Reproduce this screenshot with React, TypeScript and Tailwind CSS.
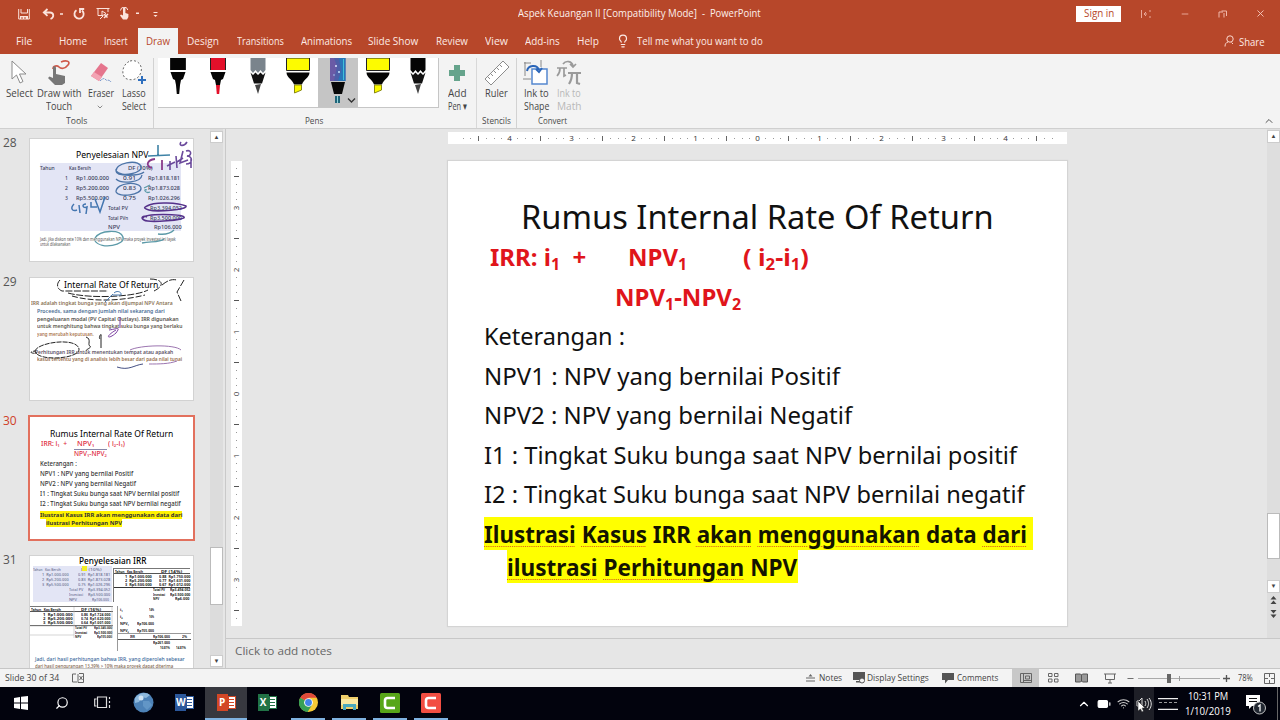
import { useLayoutEffect, useRef, useState } from "react";
import type { ReactNode } from "react";
import {
  BatteryMedium,
  ChevronDown,
  ChevronUp,
  Lightbulb,
  Minus,
  Search,
  Wifi,
  X,
} from "lucide-react";

type FitProps = { w: number; gap?: number; className?: string; children: ReactNode };

// One line of text, squeezed or stretched to an exact width.
const Fit = ({ w, gap = 0, className = "", children }: FitProps) => {
  const ref = useRef<HTMLSpanElement>(null);
  const [scale, setScale] = useState(1);

  useLayoutEffect(() => {
    if (ref.current) setScale(w / ref.current.offsetWidth);
  }, [w]);

  return (
    <span className={`block shrink-0 whitespace-pre ${className}`} style={{ width: w, marginLeft: gap }}>
      <span ref={ref} className="inline-block origin-left" style={{ transform: `scaleX(${scale})` }}>
        {children}
      </span>
    </span>
  );
};

const TitleBar = () => (
  <div className="flex h-[27px] items-center text-[#fdf0ec]">
    <svg className="ml-[18px] h-3 w-3" viewBox="0 0 12 12" fill="none" stroke="#fbe3dc">
      <path d="M.7 1v10h10.6V1M3 1v4h6.500V1" />
      <path d="M2 9.500h8" strokeWidth="3" />
      <path d="M4 9v2M7 9v2" stroke="#b7472a" />
    </svg>
    <svg className="ml-[12px] h-3 w-[22px]" viewBox="0 0 22 12" fill="none" stroke="#fbe3dc" strokeWidth="1.800">
      <path d="M5.500 1 1.800 4.500l3.700 3.300M2 4.500h6c4 0 4.500 5 .500 6.500" />
      <path d="M18 6h3" strokeWidth="1.500" />
    </svg>
    <svg className="ml-[9px] h-3 w-3" viewBox="0 0 12 12" fill="none" stroke="#fbe3dc" strokeWidth="1.800">
      <path d="M3.500 2.200a4.600 4.600 0 1 0 5.500.3M7 5V1h4.200" />
    </svg>
    <svg className="ml-[11px] h-[13px] w-[14px]" viewBox="0 0 14 13" fill="none" stroke="#fbe3dc">
      <path d="M.5 1.500h13M2 2v6.500h5M12 2v3M4 12l3-3M6 4l4 2.500L6 9z" />
      <path d="m8 11 4-4M8.500 7.500l3 3" strokeWidth="1.500" />
    </svg>
    <svg className="ml-[9px] h-[13px] w-[22px]" viewBox="0 0 22 13" fill="#fbe3dc">
      <path d="M4 1.500a1.200 1.200 0 0 1 2.400 0V6l3 1v3L8 12.500H4L1 8.500l1-1 2 1z" />
      <path d="M1.500 3.500A3.700 3.700 0 0 1 8.800 3" fill="none" stroke="#fbe3dc" />
      <path d="M17 5.500h3v1.500h-3z" />
    </svg>
    <svg className="ml-[11px] h-2 w-2" viewBox="0 0 8 8" fill="#fbe3dc">
      <path d="M1.500 2h4v1h-4zM1.500 5h4l-2 2z" />
    </svg>
    <Fit w={179} gap={358} className="text-[10.5px]">Aspek Keuangan II [Compatibility Mode]</Fit>
    <Fit w={64} className="text-[10.5px]">{"  -  PowerPoint"}</Fit>
    <div className="ml-[315px] flex h-4 w-[45px] items-center justify-center bg-white text-[#b7472a]">
      <Fit w={30} className="text-[10.5px] font-medium">Sign in</Fit>
    </div>
    <svg className="ml-[19px] h-2 w-3" viewBox="0 0 12 8" fill="none" stroke="#e9a898">
      <path d="M1.500 0v8M4 4h3M6 2 4 4l2 2M9 1h2M9 7h2" />
    </svg>
    <Minus className="ml-[28px] h-[10px] w-[10px] text-[#f0b8aa]" />
    <svg className="ml-[28px] h-2 w-[10px]" viewBox="0 0 10 8" fill="none" stroke="#f0b8aa">
      <path d="M1 7.500V2h4M3.500 1h5v5M6 3v4.500" />
    </svg>
    <X className="ml-[27px] h-[11px] w-[11px] text-[#f5c8bd]" />
  </div>
);

const TABS: [string, number, number][] = [
  ["Design", 9, 32],
  ["Transitions", 18, 47],
  ["Animations", 17, 51],
  ["Slide Show", 16, 50],
  ["Review", 18, 32],
  ["View", 17, 23],
  ["Add-ins", 17, 35],
  ["Help", 17, 22],
];

const TabRow = () => (
  <div className="flex h-[27px] items-center pt-px text-[11px] text-[#fdeae5]">
    <Fit w={16} gap={16}>File</Fit>
    <Fit w={28} gap={27}>Home</Fit>
    <Fit w={24} gap={17}>Insert</Fit>
    <div className="ml-[10px] flex h-[26px] w-10 items-center justify-center self-end bg-[#f3f3f3] text-[#b7472a]">
      <Fit w={24}>Draw</Fit>
    </div>
    {TABS.map(([label, gap, w]) => (
      <Fit key={label} w={w} gap={gap}>{label}</Fit>
    ))}
    <Lightbulb className="ml-[17px] h-[14px] w-[14px]" strokeWidth={2} />
    <Fit w={126} gap={7}>Tell me what you want to do</Fit>
    <svg className="ml-[461px] h-3 w-[11px]" viewBox="0 0 11 12" fill="none" stroke="#fbd9cf">
      <circle cx="6" cy="4" r="3.200" />
      <path d="M1 11.500c0-2.500 1-4 3-4.500M7.500 7.500l1.500 1.500" />
    </svg>
    <Fit w={26} gap={4} className="mt-[2px]">Share</Fit>
  </div>
);

const ToolButton = ({ icon, w, lines, className = "" }: { icon: ReactNode; w: number; lines: string[]; className?: string }) => (
  <div className={`flex flex-col items-center text-[10.5px] leading-[13px] text-[#454545] ${className}`}>
    <div className="flex h-[29px] items-center">{icon}</div>
    {lines.map((line, i) => (
      <Fit key={line} w={i === 0 ? w : Math.min(w, 26)}>{line}</Fit>
    ))}
  </div>
);

const GroupLabel = ({ w, className = "", children }: { w: number; className?: string; children: ReactNode }) => (
  <div className={`mt-auto flex h-[14px] justify-center text-[9px] leading-[14px] text-[#4a4a4a] ${className}`}>
    <Fit w={w}>{children}</Fit>
  </div>
);

const MarkerPen = ({ kind, color }: { kind: string; color: string }) => (
  <svg className="h-[50px] w-10" viewBox="0 0 40 50">
    {kind === "pen" && (
      <>
        <path d="M12.500 0h15v12h-15z" fill={color} />
        <path d="M12.500 0v12M27.500 0v12" stroke="#222" />
        <path d="M12.500 14h15l-2.500 7-2 1-1 5h-4l-1-5-2-1z" fill="#050505" />
        <path d="M18 27h4l-.8 9h-2.400z" fill={color} />
      </>
    )}
    {kind === "pencil" && (
      <>
        <path d="M12.500 0h15v12l-2.500 3-2.500-3-2.500 3-2.500-3-2.500 3-2.500-3z" fill={color} />
        <path d="M12.500 14.500 15 17l2.500-2.500L20 17l2.500-2.500L25 17l2.500-2.500-3.500 11h-8z" fill="#111" />
        <path d="m17 27 6-1-3 10z" fill="#444" />
      </>
    )}
    {kind === "highlighter" && (
      <>
        <path d="M8.500 0h23v12.500h-23z" fill={color} stroke="#222" />
        <path d="M8.500 14.500h23c0 5-6 7-7.500 12h-8c-1.500-5-7.500-7-7.500-12z" fill="#050505" />
        <path d="M16.500 27h7v5l-7 3z" fill={color} stroke="#8a8a10" />
      </>
    )}
    {kind === "galaxy" && (
      <>
        <rect x="12" width="15.500" height="23" fill="#4d5fa8" />
        <path d="M12 0h4l3 8-3 15h-4z" fill="#6a5ba6" />
        <path d="M21 0h6.500v23H20l3-10z" fill="#2876b8" />
        <path d="M25.500 1v21" stroke="#3fc0d8" />
        <circle cx="18" cy="8" r="1" fill="#d8e8ff" />
        <circle cx="21" cy="14" r="1" fill="#c0e4ff" />
        <circle cx="16" cy="17" r=".8" fill="#a8d0f8" />
        <path d="M13 24h14l-3 12h-8z" fill="#080808" />
        <path d="M17 38h5v7h-5z" fill="#1f6478" />
        <path d="M19.500 38v7" stroke="#8fd4dc" />
        <path d="m30 40.500 3.500 3.500 3.500-3.500" fill="none" stroke="#333" strokeWidth="1.300" />
      </>
    )}
  </svg>
);

const PENS = [
  ["pen", "#050505"],
  ["pen", "#e3102a"],
  ["pencil", "#7a848c"],
  ["highlighter", "#fdfb00"],
  ["galaxy", ""],
  ["highlighter", "#fdfb00"],
  ["pencil", "#050505"],
];

const Ribbon = () => (
  <div className="flex h-[75px] border-b border-[#cfcfcf] bg-[#f3f3f3] pt-[4px]">
    <div className="flex w-[153px] flex-col">
      <div className="flex">
        <ToolButton
          className="ml-[5px] w-7"
          w={27}
          lines={["Select"]}
          icon={
            <svg className="h-[26px] w-[18px]" viewBox="0 0 18 26" fill="#fff" stroke="#8b8b8b">
              <path d="M2 1v18l4.500-4 3.500 8 3-1.500-3.500-7.500H16z" />
            </svg>
          }
        />
        <ToolButton
          className="ml-[3px] w-[46px]"
          w={45}
          lines={["Draw with", "Touch"]}
          icon={
            <svg className="h-[26px] w-6" viewBox="0 0 24 26">
              <path d="M6 9c0-3 4-4 6-2s6 2 9-2-2-5-7-3" fill="none" stroke="#cf5a4b" strokeWidth="1.700" />
              <path d="M6 7c1-1.500 3-1 3 1v6l9 2v7l-3 2H8l-7-7 1.500-1.500L6 18z" fill="#777" />
            </svg>
          }
        />
        <ToolButton
          className="ml-[5px] w-[28px]"
          w={26}
          lines={["Eraser"]}
          icon={
            <svg className="h-[26px] w-6" viewBox="0 0 24 26">
              <path d="m12 3 7 5-9 13-8-5z" fill="#e5758d" />
              <path d="m2 16 3-4 8 5-3 4z" fill="#f3a3b3" />
              <path d="M11 21c4-4 5-2 6-1s3-1 5 2" fill="none" stroke="#6a8cc7" strokeDasharray="2 1" />
            </svg>
          }
        />
        <ToolButton
          className="ml-[5px] w-7"
          w={24}
          lines={["Lasso", "Select"]}
          icon={
            <svg className="h-[26px] w-6" viewBox="0 0 24 26" fill="none">
              <path d="M8 1c7-2 13 4 11 11s-8 9-14 7S-1 5 8 1z" fill="#fff" stroke="#6b6b6b" strokeDasharray="2 2" />
              <path d="M20 16v8M16 20h8" stroke="#2f6fbe" strokeWidth="2" />
            </svg>
          }
        />
      </div>
      <div className="-mt-[10px] flex h-2 justify-end pr-[49px]">
        <ChevronDown className="h-2 w-2 text-[#555]" />
      </div>
      <GroupLabel w={21}>Tools</GroupLabel>
    </div>
    <div className="flex w-[323px] flex-col border-l border-[#d2d2d2] pl-[4px]">
      <div className="flex">
        <div className="flex h-[50px] border-r border-b border-[#c6c6c6] bg-white">
          {PENS.map(([kind, color], i) => (
            <div key={i} className={kind === "galaxy" ? "bg-[#c5c5c5]" : "bg-white"}>
              <MarkerPen kind={kind} color={color} />
            </div>
          ))}
        </div>
        <ToolButton
          className="ml-[4px] w-7"
          w={19}
          lines={["Add", "Pen ▾"]}
          icon={
            <svg className="h-[18px] w-[18px]" viewBox="0 0 18 18" fill="#66a48c">
              <path d="M6 1h6v5h5v6h-5v5H6v-5H1V6h5z" />
            </svg>
          }
        />
      </div>
      <GroupLabel w={18} className="pr-[6px]">Pens</GroupLabel>
    </div>
    <div className="flex w-10 flex-col border-l border-[#d8d8d8]">
      <ToolButton
        w={23}
        lines={["Ruler"]}
        icon={
          <svg className="h-[26px] w-[26px]" viewBox="0 0 26 26" fill="#fff" stroke="#8c8c8c">
            <path d="M1 19 19 1l6 6L7 25z" />
            <path d="m4 17 2 2m1-5 2 2m1-5 2 2m1-5 2 2m1-5 2 2" />
          </svg>
        }
      />
      <GroupLabel w={29}>Stencils</GroupLabel>
    </div>
    <div className="flex w-[72px] flex-col border-l border-[#d2d2d2]">
      <div className="flex">
        <ToolButton
          className="ml-[3px] w-8"
          w={25}
          lines={["Ink to", "Shape"]}
          icon={
            <svg className="h-[26px] w-[26px]" viewBox="0 0 26 26" fill="none">
              <path d="M9 9h15v15H9z" fill="#fff" stroke="#5588cf" strokeWidth="1.500" />
              <path d="M2 2v14M0 19h8M18 0v7M1 3h7" stroke="#888" />
              <path d="M4 11c1-6 10-7 12-1m-3-1 3 3 3-4" stroke="#2b66b9" strokeWidth="2" />
            </svg>
          }
        />
        <ToolButton
          className="ml-[1px] w-8 text-[#b8b8b8]!"
          w={24}
          lines={["Ink to", "Math"]}
          icon={
            <svg className="h-[26px] w-[26px]" viewBox="0 0 26 26" fill="none" stroke="#9a9a9a" strokeWidth="1.700">
              <path d="M1 8h10M4 8c0 4-1 6-3 8M8 8v8l2-1" />
              <path d="M12 13h13M16 13c0 5-1 8-3 11M21 13v10l3 1" strokeWidth="2.200" />
              <path d="M7 4c3-4 9-3 10 2m-3-2 3 3 3-3" />
            </svg>
          }
        />
      </div>
      <GroupLabel w={29}>Convert</GroupLabel>
    </div>
    <ChevronUp className="mt-auto mr-[5px] mb-[1px] ml-auto h-3 w-3 text-[#555]" />
  </div>
);

type Row = { h: number; cells: [number, number, string][]; className?: string };

const MiniRows = ({ rows }: { rows: Row[] }) => (
  <>
    {rows.map((row, i) => (
      <div key={i} className={`flex items-center ${row.className ?? ""}`} style={{ height: row.h }}>
        {row.cells.map(([gap, w, text], j) => (
          <Fit key={j} gap={gap} w={w}>{text}</Fit>
        ))}
      </div>
    ))}
  </>
);

const NPV_ROWS: Row[] = [
  { h: 10, cells: [[0, 15, "Tahun"], [14, 22, "Kas Bersih"], [37, 25, "DF (10%)"]] },
  { h: 10, cells: [[25, 3, "1"], [8, 33, "Rp1.000.000"], [14, 13, "0.91"], [12, 32, "Rp1.818.181"]] },
  { h: 10, cells: [[25, 3, "2"], [8, 33, "Rp5.200.000"], [14, 13, "0.83"], [12, 32, "Rp1.873.028"]] },
  { h: 10, cells: [[25, 3, "3"], [8, 33, "Rp5.500.000"], [14, 13, "0.75"], [12, 32, "Rp1.026.296"]] },
  { h: 10, cells: [[68, 20, "Total PV"], [22, 32, "Rp3.394.052"]] },
  { h: 9, cells: [[68, 20, "Total PVn"], [22, 32, "Rp3.500.000"]] },
  { h: 10, cells: [[68, 12, "NPV"], [34, 28, "Rp106.000"]] },
];

const IRR_TEXT: Row[] = [
  { h: 7.7, cells: [[1, 142, "IRR adalah tingkat bunga yang akan dijumpai NPV Antara"]], className: "text-[#8b7355]" },
  { h: 7.7, cells: [[7, 128, "Proceeds, sama dengan jumlah nilai sekarang dari"]], className: "text-[#4d6f96]" },
  { h: 7.7, cells: [[7, 142, "pengeluaran modal (PV Capital Outlays). IRR digunakan"]], className: "text-[#53504a]" },
  { h: 7.7, cells: [[7, 145, "untuk menghitung bahwa tingkat suku bunga yang berlaku"]], className: "text-[#60594e]" },
  { h: 7.7, cells: [[7, 57, "yang merubah keputusan."]], className: "text-[#ad7850]" },
  { h: 10, cells: [] },
  { h: 7.7, cells: [[5, 138, "Perhitungan IRR untuk menentukan tempat atau apakah"]], className: "text-[#5d5366]" },
  { h: 7.7, cells: [[7, 145, "kasus tertentu yang di analisis lebih besar dari pada nilai tunai"]], className: "text-[#966d4c]" },
];

const FORMULA_ROWS: Row[] = [
  { h: 10, cells: [[0, 93, "NPV1 : NPV yang bernilai Positif"]] },
  { h: 10.5, cells: [[0, 96, "NPV2 : NPV yang bernilai Negatif"]] },
  { h: 10, cells: [[0, 139, "I1 : Tingkat Suku bunga saat NPV bernilai positif"]] },
  { h: 10, cells: [[0, 141, "I2 : Tingkat Suku bunga saat NPV bernilai negatif"]] },
];

const Thumb = ({ n, active = false, children }: { n: number; active?: boolean; children: ReactNode }) => (
  <div className="flex h-[139px] shrink-0">
    <div className={`w-[30px] pl-[3px] text-[12px] leading-[8px] ${active ? "text-[#cf3f28]" : "text-[#555]"}`}>
      <Fit w={14}>{n}</Fit>
    </div>
    <div
      className={`relative h-[122px] w-[163px] overflow-hidden bg-white font-['Noto_Sans',sans-serif] text-black ${
        active ? "outline-2 outline-[#e2705d]" : "outline outline-[#d2d2d2]"
      }`}
    >
      {children}
    </div>
  </div>
);

const SlidePanel = () => (
  <div className="flex w-[226px] border-r border-[#c9c9c9]">
    <div className="flex w-[210px] flex-col overflow-hidden pt-[10px]">
      <Thumb n={28}>
        <div className="flex h-[24px] items-center pt-[8px] text-[9px]">
          <Fit w={72} gap={46}>Penyelesaian NPV</Fit>
        </div>
        <div className="ml-[10px] h-[68px] w-[141px] bg-[#e3e5f5] text-[5px] leading-[6px] font-medium text-[#3c415c]">
          <MiniRows rows={NPV_ROWS} />
        </div>
        <div className="mt-[6px] ml-[10px] text-[4.5px] leading-[5px] text-[#555]">
          <Fit w={136}>Jadi, jika diskon rate 10% dan menggunakan NPV maka proyek investasi ini layak</Fit>
          <Fit w={30}>untuk dilaksanakan</Fit>
        </div>
        <svg className="absolute inset-0 h-full w-full" viewBox="0 0 163 122" fill="none" stroke="#6b4a9c" strokeWidth="1.300">
          <path d="M86 32c0-8 20-12 25-5 3 7-20 12-25 5 0 6 24 5 28 1M86 40c5 5 25 4 26-4M86 53c0-10 24-11 25-4s-22 10-25 4" stroke="#4d75a8" />
          <path d="M128 6v11M118 17l22-1" stroke="#3f83a6" strokeWidth="1.600" />
          <path d="M125 20c-8 1-10 7-3 9M132 21v10" stroke="#8a3a8a" strokeWidth="1.800" />
          <path d="M140 22v9M137 27l8-4M146 17l1 12M147 23l6-4M153 12l-3 12 8-3M151 3c-3 4 3 5 6 0M156 12c7-2 5 6 1 5 6 0 6 8-1 8M161 20v9" strokeWidth="1.600" />
          <path d="M44 65c-4 4-2 8 3 6M49 66l1 8M56 65c-5 0-3 5 1 3l-1 7M61 63v5h6M65 60l5 13 5-15" stroke="#4476b0" strokeWidth="1.500" />
          <path d="M117 67c8-5 32-3 39 0 2 4-30 6-37 4s-4-3-2-4M113 79c2-5 38-4 41-1s-35 6-40 3c-4-2-1-5 3-3" stroke="#56328b" strokeWidth="1.600" />
          <path d="M65 99c5-8 25-9 28-1s-22 13-28 4M128 95c8 1 13-1 16-4M112 104c8-2 17 0 22-4M114 49l6-3M117 51c-4-2-2 4 3 2" stroke="#5c9aa8" />
        </svg>
      </Thumb>

      <Thumb n={29}>
        <div className="flex h-[14px] items-center text-[9px]">
          <Fit w={94} gap={34}>Internal Rate Of Return</Fit>
        </div>
        <div className="pt-[8px] text-[5.5px] leading-[7px] font-semibold">
          <MiniRows rows={IRR_TEXT} />
        </div>
        <svg className="absolute inset-0 h-full w-full" viewBox="0 0 163 122" fill="none" stroke="#222">
          <path d="M30 2c-4 4-3 9 2 11h46M38 15c22 6 67 4 80-3M120 1c12 0 16 6 4 12M132 7c6-5 10-6 15-5M154 2l-7 12 4 9" strokeDasharray="7 1.500" />
          <path d="M42 18c20 6 50 5 73-1" strokeDasharray="6 2" />
          <path d="M75 24 83 16M84 15c3-3 8-1 7 2h-8" stroke="#4a7bb0" />
          <path d="M5 73c3-9 42-14 44-2 1 10-42 13-44 2-8 1-2 3 2 2" strokeDasharray="5 1" />
          <path d="M56 59c6 2 1 8 4 9 2 2-4 3-4 5M71 70V58c1-4-3 1-1 3" />
          <path d="M86 52c-12 7-8 10 0 3 5-7 1-4-7-3M90 39v11" stroke="#7b3ea0" />
          <path d="M100 72c10-5 45-6 51 0M119 86c10 0 20 0 28-3" stroke="#9c75b0" />
          <path d="M87 89c12 4 17-2 26-3" stroke="#444f83" />
        </svg>
      </Thumb>

      <Thumb n={30} active>
        <div className="flex h-[22px] items-end text-[9px] leading-[11px]">
          <Fit w={123} gap={20}>Rumus Internal Rate Of Return</Fit>
        </div>
        <div className="flex h-[9px] items-center text-[6.5px] leading-[8px] font-medium text-[#e02a3c]">
          <Fit w={26} gap={11}>IRR: i₁  +</Fit>
          <Fit w={17} gap={10}>NPV₁</Fit>
          <Fit w={17} gap={14}>( i₂-i₁)</Fit>
        </div>
        <div className="flex h-[10px] items-center text-[6.5px] leading-[8px] font-medium text-[#e02a3c]">
          <Fit w={33} gap={44} className="border-t border-[#88a]">NPV₁-NPV₂</Fit>
        </div>
        <div className="ml-[10px] pt-px text-[6.5px] leading-[9px] font-medium text-[#333]">
          <Fit w={37}>Keterangan :</Fit>
          <MiniRows rows={FORMULA_ROWS} />
          <div className="mt-[2px] flex h-[8px] text-[6px] leading-[8px] font-bold">
            <Fit w={142} className="bg-[#fff200]">Ilustrasi Kasus IRR akan menggunakan data dari</Fit>
          </div>
          <div className="flex h-[8px] text-[6px] leading-[8px] font-bold">
            <Fit w={76} gap={6} className="bg-[#fff200]">ilustrasi Perhitungan NPV</Fit>
          </div>
        </div>
      </Thumb>

      <Thumb n={31}>
        <div className="flex h-[10px] items-center text-[9px] leading-[10px] font-medium">
          <Fit w={67} gap={49}>Penyelesaian IRR</Fit>
        </div>
        <div className="flex text-[4px] leading-[5px] font-bold text-[#222]">
          <div className="ml-[3px] h-[36px] w-[79px] bg-[#e3e5f5] font-medium text-[#686e90]">
            <MiniRows
              rows={[
                { h: 6, cells: [[0, 28, "Tahun   Kas Bersih"], [20, 21, "DF (10%)"]] },
                { h: 5, cells: [[9, 27, "1  Rp1.000.000"], [9, 32, "0.91  Rp1.818.181"]] },
                { h: 5, cells: [[9, 27, "2  Rp5.200.000"], [9, 32, "0.83  Rp1.873.028"]] },
                { h: 5, cells: [[9, 27, "3  Rp5.500.000"], [9, 32, "0.75  Rp1.026.296"]] },
                { h: 5, cells: [[36, 14, "Total PV"], [5, 22, "Rp3.394.052"]] },
                { h: 5, cells: [[36, 14, "Investasi"], [5, 22, "Rp3.500.000"]] },
                { h: 5, cells: [[36, 8, "NPV"], [15, 17, "Rp106.000"]] },
              ]}
            />
          </div>
          <div className="mt-[2px] ml-[1px] h-[34px] w-[77px] border-t border-l border-[#777]">
            <MiniRows
              rows={[
                { h: 5, cells: [[1, 28, "Tahun   Kas Bersih"], [18, 21, "DF (14%)"]], className: "border-b border-[#555]" },
                { h: 4.500, cells: [[11, 27, "1  Rp1.000.000"], [7, 31, "0.88  Rp1.750.000"]] },
                { h: 4.500, cells: [[11, 27, "2  Rp5.200.000"], [7, 31, "0.77  Rp1.631.000"]] },
                { h: 4.500, cells: [[11, 27, "3  Rp5.500.000"], [7, 31, "0.67  Rp1.012.000"]], className: "border-b border-[#333]" },
                { h: 4.500, cells: [[39, 12, "Total PV"], [5, 20, "Rp3.494.052"]] },
                { h: 4.500, cells: [[39, 12, "Investasi"], [5, 20, "Rp3.500.000"]] },
                { h: 4.500, cells: [[39, 6, "NPV"], [16, 14, "Rp6.000"]] },
              ]}
            />
          </div>
        </div>
        <div className="mt-[4px] flex text-[4px] leading-[5px] font-bold text-[#222]">
          <div className="h-[34px] w-[83px] border-t border-[#777]">
            <MiniRows
              rows={[
                { h: 5, cells: [[1, 30, "Tahun   Kas Bersih"], [20, 20, "DF (16%)"]], className: "border-b border-[#555]" },
                { h: 4.500, cells: [[13, 30, "1  Rp1.000.000"], [8, 29, "0.86  Rp1.724.000"]] },
                { h: 4.500, cells: [[13, 30, "2  Rp5.200.000"], [8, 29, "0.74  Rp1.620.000"]] },
                { h: 4.500, cells: [[13, 30, "3  Rp5.500.000"], [8, 29, "0.64  Rp1.001.000"]], className: "border-b border-[#555]" },
                { h: 4.500, cells: [[45, 12, "Total PV"], [7, 18, "Rp3.345.000"]] },
                { h: 4.500, cells: [[45, 12, "Investasi"], [7, 18, "Rp3.500.000"]] },
                { h: 4.500, cells: [[45, 6, "NPV"], [16, 15, "Rp155.000"]] },
              ]}
            />
          </div>
          <div className="ml-[4px] h-[45px] w-[74px] border-l border-[#999]">
            <MiniRows
              rows={[
                { h: 7, cells: [[2, 3, "i₁"], [26, 5, "14%"]] },
                { h: 7, cells: [[2, 3, "i₂"], [26, 5, "16%"]] },
                { h: 7, cells: [[2, 9, "NPV₁"], [8, 17, "Rp106.000"]] },
                { h: 7, cells: [[2, 9, "NPV₂"], [8, 17, "Rp155.000"]], className: "border-b border-[#999]" },
                { h: 6, cells: [[12, 5, "IRR"], [18, 17, "Rp106.000"], [12, 5, "2%"]], className: "border-b border-[#555]" },
                { h: 5, cells: [[35, 17, "Rp261.000"]] },
                { h: 5, cells: [[42, 10, "10.81%"], [6, 10, "14.81%"]] },
              ]}
            />
          </div>
        </div>
        <div className="mt-[5px] ml-[5px] text-[5.5px] leading-[6.5px] font-medium text-[#38669b]">
          <Fit w={150}>Jadi, dari hasil perhitungan bahwa IRR, yang diperoleh sebesar</Fit>
          <Fit w={138} className="text-[#80634c]">dari hasil pengurangan 13.39% &gt; 10% maka proyek dapat diterima</Fit>
        </div>
        <svg className="absolute inset-0 h-full w-full" viewBox="0 0 163 122" fill="none">
          <path d="M52 10h5v5h-5z" fill="#f3ee22" />
          <path d="M44 51v31M0 70h83M0 79h44M82 50v32" stroke="#bbb" strokeWidth=".6" />
        </svg>
      </Thumb>
    </div>
    <div className="flex w-[13px] flex-col bg-[#dcdcdc]">
      <div className="mt-[2px] flex h-[12px] items-center justify-center border border-[#ccc] bg-white text-[6px] text-[#444]">▲</div>
      <div className="mt-[404px] h-[58px] border border-[#bbb] bg-white" />
      <div className="mt-auto mb-[1px] flex h-[12px] items-center justify-center border border-[#ccc] bg-white text-[6px] text-[#444]">▼</div>
    </div>
  </div>
);

const HorizontalRuler = () => (
  <div className="ml-[206px] flex h-3 w-[619px] justify-center bg-white text-[8px] leading-3 text-[#333]">
    {Array.from({ length: 77 }, (_, k) => k - 38).map((i) => (
      <div key={i} className="flex w-[7.75px] shrink-0 items-center justify-center">
        {i % 8 === 0 ? Math.abs(i / 8) : <i className={i % 4 === 0 ? "h-[5px] w-px bg-[#666]" : "h-px w-px bg-[#999]"} />}
      </div>
    ))}
  </div>
);

const VerticalRuler = () => (
  <div className="ml-[5px] flex h-[465px] w-[11px] flex-col justify-center bg-white text-[8px] leading-[8px] text-[#333]">
    {Array.from({ length: 59 }, (_, k) => k - 29).map((i) => (
      <div key={i} className="flex h-[7.75px] shrink-0 items-center justify-center">
        {i % 8 === 0 ? (
          <span className="-rotate-90">{Math.abs(i / 8)}</span>
        ) : (
          <i className={i % 4 === 0 ? "h-px w-[5px] bg-[#555]" : "h-px w-px bg-[#999]"} />
        )}
      </div>
    ))}
  </div>
);

const Sub = ({ children }: { children: ReactNode }) => <sub className="text-[16px]">{children}</sub>;

const Misspelt = ({ children }: { children: ReactNode }) => (
  <span className="underline decoration-[#d8571c] decoration-dotted decoration-1 underline-offset-[3px]">{children}</span>
);

const BODY: [number, string][] = [
  [140, "Keterangan :"],
  [355, "NPV1 : NPV yang bernilai Positif"],
  [367, "NPV2 : NPV yang bernilai Negatif"],
  [532, "I1 : Tingkat Suku bunga saat NPV bernilai positif"],
  [540, "I2 : Tingkat Suku bunga saat NPV bernilai negatif"],
];

const Slide = () => (
  <div className="ml-[206px] h-[465px] w-[619px] bg-white pt-[36px] font-['Noto_Sans',sans-serif] text-[24px] leading-[39.5px] text-[#111] shadow-[0_0_1px_1px_#d4d4d4]">
    <h1 className="flex h-10 text-[33px] leading-10">
      <Fit w={473} gap={73}>Rumus Internal Rate Of Return</Fit>
    </h1>
    <div className="flex h-[39.5px] font-bold text-[#e0151b]">
      <Fit w={96} gap={42}>IRR: i<Sub>1</Sub>{"  +"}</Fit>
      <Fit w={59} gap={42}>NPV<Sub>1</Sub></Fit>
      <Fit w={66} gap={56}>( i<Sub>2</Sub>-i<Sub>1</Sub>)</Fit>
    </div>
    <div className="flex h-[39.5px] font-bold text-[#e0151b]">
      <Fit w={126} gap={167}>NPV<Sub>1</Sub>-NPV<Sub>2</Sub></Fit>
    </div>
    {BODY.map(([w, text]) => (
      <div key={text} className="flex h-[39.5px]">
        <Fit w={w + 1} gap={36}>{text}</Fit>
      </div>
    ))}
    <div className="mt-[3px] ml-[36px] flex h-[33px] w-[549px] bg-[#ffff00] leading-[34px] font-bold text-[#141400]">
      <Fit w={543}>
        <Misspelt>Ilustrasi</Misspelt> <Misspelt>Kasus</Misspelt> IRR <Misspelt>akan</Misspelt>{" "}
        <Misspelt>menggunakan</Misspelt> data <Misspelt>dari</Misspelt>
      </Fit>
    </div>
    <div className="ml-[59px] flex h-[33px] w-[291px] bg-[#ffff00] leading-[34px] font-bold text-[#141400]">
      <Fit w={290}>
        <Misspelt>ilustrasi</Misspelt> <Misspelt>Perhitungan</Misspelt> NPV
      </Fit>
    </div>
  </div>
);

const Editor = () => (
  <div className="flex flex-1 flex-col">
    <div className="flex h-[509px]">
      <div className="flex w-[1041px] flex-col">
        <div className="h-[3px]" />
        <div className="pl-[16px]">
          <HorizontalRuler />
        </div>
        <div className="mt-[17px] flex">
          <VerticalRuler />
          <Slide />
        </div>
      </div>
      <div className="flex w-[13px] flex-col bg-[#dedede]">
        <div className="mt-[1px] flex h-[13px] items-center justify-center border border-[#ccc] bg-white text-[6px] text-[#444]">▲</div>
        <div className="mt-[370px] h-[46px] border border-[#bbb] bg-white" />
        <div className="mt-[21px] flex h-[13px] items-center justify-center border border-[#ccc] bg-white text-[6px] text-[#444]">▼</div>
        <svg className="mt-[3px] h-[28px] w-[13px]" viewBox="0 0 13 28" fill="#444">
          <path d="m6.500 0 3 3.500h-6zm0 4.500 3 3.500h-6zM3.500 14h6l-3 3.500zm0 4.500h6l-3 3.500z" />
        </svg>
      </div>
    </div>
    <div className="flex h-[30px] items-center border-t border-[#c8c8c8] pb-[5px] text-[11px] text-[#666]">
      <Fit w={97} gap={9}>Click to add notes</Fit>
    </div>
  </div>
);

const StatusBar = () => (
  <div className="flex h-[19px] items-center border-t border-[#c6c6c6] bg-[#f3f3f3] text-[9.5px] text-[#444]">
    <Fit w={54} gap={5}>Slide 30 of 34</Fit>
    <svg className="ml-[13px] h-[10px] w-[12px]" viewBox="0 0 12 10" fill="none" stroke="#666">
      <path d="M4 1H.5v8H5M7 .5h4.500v9H6V1M7.500 3l3 4M10.500 3l-3 4" />
    </svg>
    <svg className="ml-[722px] h-2 w-[9px]" viewBox="0 0 9 8" fill="#666">
      <path d="m4.500 0 2 2.500h-4zM0 3.500h9v1H0zM0 6.500h9v1H0z" />
    </svg>
    <Fit w={23} gap={4}>Notes</Fit>
    <svg className="ml-[11px] h-3 w-[13px]" viewBox="0 0 13 12" fill="#555">
      <path d="M0 0h12v8H0zM3 9h5v1.500H3z" />
      <circle cx="9" cy="8.500" r="2.500" fill="#f3f3f3" stroke="#555" />
    </svg>
    <Fit w={62} gap={1}>Display Settings</Fit>
    <svg className="ml-[13px] h-[11px] w-[12px]" viewBox="0 0 12 11" fill="#555">
      <path d="M0 0h12v7H6l-3 3.500V7H0z" />
    </svg>
    <Fit w={41} gap={3}>Comments</Fit>
    <div className="ml-[14px] flex h-full w-[27px] items-center justify-center bg-[#c8c8c8]">
      <svg className="h-[10px] w-3" viewBox="0 0 12 10" fill="none" stroke="#666">
        <path d="M.5.5h11v9H.5zM3.500.5v9M5.500 3h4v3h-4zM3.500 7.500h8" />
      </svg>
    </div>
    <svg className="ml-[9px] h-[10px] w-[11px]" viewBox="0 0 11 10" fill="none" stroke="#666">
      <path d="M.5.5h3.500v3H.5zM6.500.5H10v3H6.500zM.5 6h3.500v3H.5zM6.500 6H10v3H6.500z" />
    </svg>
    <svg className="ml-[16px] h-[10px] w-[13px]" viewBox="0 0 13 10" fill="#999" stroke="#555">
      <path d="M.5 1h5l1 1 1-1h5v8h-5l-1-1-1 1h-5zM6.500 2v6" />
    </svg>
    <svg className="ml-[16px] h-[11px] w-[12px]" viewBox="0 0 12 11" fill="none" stroke="#666">
      <path d="M0 1h12M1.500 1v5.500h9V1M6 6.500V10M4 10h4" />
    </svg>
    <Minus className="ml-[10px] h-[9px] w-[9px]" />
    <div className="ml-[3px] flex h-[10px] w-[82px] items-center">
      <div className="h-px w-[29px] bg-[#aaa]" />
      <div className="h-[9px] w-[4px] bg-[#666]" />
      <div className="h-px w-[8px] bg-[#aaa]" />
      <div className="h-[5px] w-px bg-[#999]" />
      <div className="h-px flex-1 bg-[#aaa]" />
    </div>
    <svg className="ml-[2px] h-[9px] w-[9px]" viewBox="0 0 9 9" stroke="#555" strokeWidth="1.300">
      <path d="M4.500 1v7M1 4.500h7" />
    </svg>
    <Fit w={15} gap={7}>78%</Fit>
    <svg className="ml-[11px] h-[11px] w-[11px]" viewBox="0 0 11 11" fill="none" stroke="#666">
      <path d="M.5.5h10v10H.5zM5.500 1v3M5.500 7v3M1 5.500h3M7 5.500h3" />
    </svg>
  </div>
);

const OfficeIcon = ({ letter, color }: { letter: string; color: string }) => (
  <div className="flex h-[17px] w-[19px] items-center">
    <div className="flex h-[17px] w-[11px] items-center justify-center text-[10px] font-bold text-white" style={{ backgroundColor: color }}>
      {letter}
    </div>
    <div className="flex h-[13px] w-[8px] flex-col justify-evenly border bg-white pr-px" style={{ borderColor: color }}>
      <i className="h-px" style={{ backgroundColor: color }} />
      <i className="h-px" style={{ backgroundColor: color }} />
      <i className="h-px" style={{ backgroundColor: color }} />
    </div>
  </div>
);

const CamtasiaIcon = ({ color }: { color: string }) => (
  <svg className="h-5 w-5" viewBox="0 0 20 20">
    <rect width="20" height="20" rx="1.500" fill={color} />
    <path d="M15 5H7.500Q5 5 5 7.500v5Q5 15 7.500 15H15" fill="none" stroke="#fff" strokeWidth="2.600" />
  </svg>
);

const TASKS: { open?: boolean; active?: boolean; icon: ReactNode }[] = [
  {
    icon: (
      <svg className="h-[14px] w-[14px]" viewBox="0 0 14 14" fill="#fff">
        <path d="m0 2 6-1v5.500H0zM7 .8 14 0v6.500H7zM0 7.500h6V13l-6-1zM7 7.500h7V14l-7-.9z" />
      </svg>
    ),
  },
  { icon: <Search className="h-[14px] w-[14px] -scale-x-100 text-white" strokeWidth={2} /> },
  {
    icon: (
      <svg className="h-[13px] w-[17px]" viewBox="0 0 17 13" fill="none" stroke="#ddd" strokeWidth="1.200">
        <path d="M3.500 1h9v10.500h-9zM2.500 3H.7v7h1.800M15.500 1v2M15.500 5v2M15.500 9v3" />
      </svg>
    ),
  },
  {
    icon: (
      <svg className="h-[21px] w-[21px]" viewBox="0 0 21 21">
        <circle cx="10.500" cy="10.500" r="10" fill="#4d82b7" />
        <path d="M2 6c4-6 12-6 15-3l-4 3-4-1-3 5-4 1z" fill="#8db8dc" />
        <path d="M10 9h6l3 4-5 5-4-4z" fill="#6296c6" />
        <circle cx="8" cy="6" r="2.500" fill="#cfe3f3" />
      </svg>
    ),
  },
  { icon: <OfficeIcon letter="W" color="#2b579a" /> },
  { active: true, open: true, icon: <OfficeIcon letter="P" color="#d24726" /> },
  { icon: <OfficeIcon letter="X" color="#217346" /> },
  {
    open: true,
    icon: (
      <svg className="h-[19px] w-[19px]" viewBox="0 0 20 20">
        <circle cx="10" cy="10" r="10" fill="#f6c935" />
        <path d="M10 10 1.300 5A10 10 0 0 1 18.700 5H10z" fill="#e04a3a" />
        <path d="M10 10 1.300 5a10 10 0 0 0 7.700 15l5-8z" fill="#37a155" />
        <circle cx="10" cy="10" r="4.600" fill="#fff" />
        <circle cx="10" cy="10" r="3.600" fill="#4285e8" />
      </svg>
    ),
  },
  {
    open: true,
    icon: (
      <svg className="h-[17px] w-[19px]" viewBox="0 0 19 17">
        <path d="M1 1h7l1 2h9v12H1z" fill="#f0cf6a" />
        <path d="M1 5h17v6H1z" fill="#fae8a1" />
        <path d="M3 16v-6h13v6h-3v-3H6v3z" fill="#4ba9bd" />
      </svg>
    ),
  },
  { open: true, icon: <CamtasiaIcon color="#58a618" /> },
  { open: true, icon: <CamtasiaIcon color="#f24e42" /> },
];

const Taskbar = () => (
  <div className="flex h-[33px] items-center bg-[#02030d] text-white">
    {TASKS.map(({ open, active, icon }, i) => (
      <div key={i} className={`flex h-full w-[41.1px] flex-col items-center ${active ? "bg-[#37383f]" : ""}`}>
        <div className="flex h-[31px] items-center">{icon}</div>
        {open && <div className={`h-[2px] bg-[#7fb2e0] ${active ? "w-full" : "w-[34px]"}`} />}
      </div>
    ))}
    <ChevronUp className="ml-auto h-[14px] w-[14px]" strokeWidth={2} />
    <BatteryMedium className="ml-[6px] h-[14px] w-[14px]" fill="#fff" strokeWidth={2} />
    <Wifi className="ml-[6px] h-[13px] w-[13px] text-[#ccc]" strokeWidth={2} />
    <div className="ml-[4px] flex h-full w-5 items-center justify-center bg-[#1e1f27]">
      <svg className="h-4 w-4" viewBox="0 0 16 16" fill="none" stroke="#ddd">
        <path d="M1 5v5h2l3 3V2L3 5zM9 5c1 2 1 3 0 5M11 3c2 3 2 6 0 9M13 2c3 4 3 8 0 12" />
        <path d="M2 5v10l2.500-2 1.500 3 1.500-1-1.500-3H9z" fill="#fff" stroke="#222" strokeWidth=".5" />
      </svg>
    </div>
    <svg className="ml-[4px] h-3 w-5" viewBox="0 0 20 12" fill="none" stroke="#eee">
      <path d="M0 .7h20M0 11.300h20" strokeWidth="1.300" />
      <path d="M1 4.500h18" strokeDasharray="3 2" stroke="#999" />
    </svg>
    <div className="ml-[7px] flex w-[46px] flex-col items-center text-[10.5px] leading-[15px]">
      <Fit w={40}>10:31 PM</Fit>
      <Fit w={46}>1/10/2019</Fit>
    </div>
    <svg className="ml-[14px] h-[22px] w-[22px]" viewBox="0 0 22 22">
      <path d="M1 2h14v11H7l-3 3v-3H1z" fill="#fff" />
      <path d="M4 5.500h8M4 8.500h8" stroke="#111" />
      <circle cx="14.500" cy="15" r="6" fill="#222832" stroke="#c4c4c4" />
      <path d="m13 13.500 2-1.500v6.500" fill="none" stroke="#fff" strokeWidth="1.300" />
    </svg>
    <div className="mr-[2px] ml-[10px] h-full w-px bg-[#666]" />
  </div>
);

const App = () => {
  return (
    <div className="flex h-[720px] w-[1280px] flex-col overflow-hidden bg-[#e6e6e6] font-['Open_Sans',sans-serif]">
      <header className="bg-[#b7472a]">
        <TitleBar />
        <TabRow />
      </header>
      <Ribbon />
      <main className="flex h-[539px]">
        <SlidePanel />
        <Editor />
      </main>
      <StatusBar />
      <Taskbar />
    </div>
  );
};

export default App;
